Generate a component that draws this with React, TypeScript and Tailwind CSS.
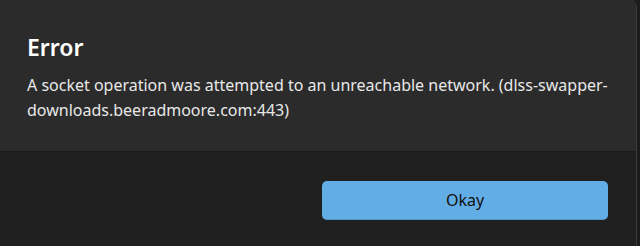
export default function App() {
  return (
    <div className="w-[640px] h-[246px] overflow-hidden bg-[#1c1c1c] font-['Noto_Sans',sans-serif]">
      <div className="-ml-[2px] -mt-px w-[639px] h-[260px] flex flex-col rounded-r-[8px] border border-[#3a3a3a] overflow-hidden">
        <div className="bg-[#2b2b2b] h-[151px] pl-[28px] pr-[24px] pt-[31px]">
          <h1 className="text-[23px] leading-[32px] font-semibold text-white">Error</h1>
          <p className="mt-[10px] text-[16px] leading-[25px] text-[#e8e8e8]">
            A socket operation was attempted to an unreachable network. (dlss-swapper-downloads.beeradmoore.com:443)
          </p>
        </div>
        <div className="flex-1 bg-[#202020] border-t border-[#1a1a1a] flex justify-end pr-[28px] pt-[29px]">
          <button className="w-[286px] h-[39px] rounded-[5px] bg-[#62ade5] border-b border-[#5597c8] text-[16px] text-[#111]">
            Okay
          </button>
        </div>
      </div>
    </div>
  );
}
